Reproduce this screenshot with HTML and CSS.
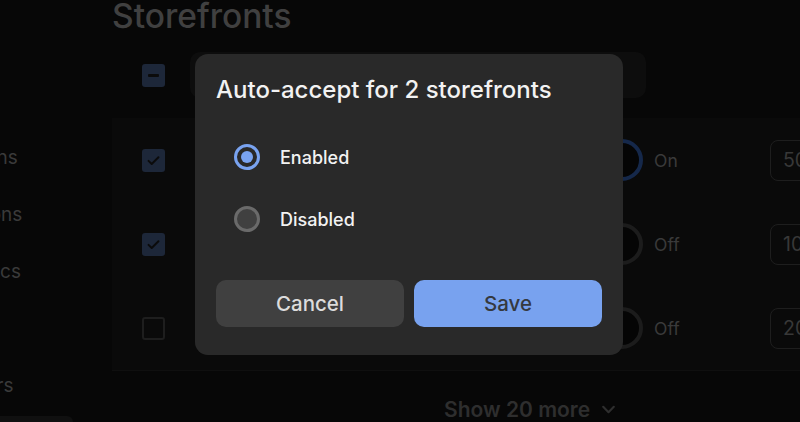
FILE: index.html
```html
<!DOCTYPE html>
<html lang="en">
<head>
<meta charset="utf-8">
<title>Storefronts</title>
<link rel="stylesheet" href="styles.css">
</head>
<body>
<div class="app">
  <nav class="sidebar">
    <ul class="nav">
      <li class="nav-item">Promotions</li>
      <li class="nav-item">Integrations</li>
      <li class="nav-item">Diagnostics</li>
      <li class="nav-item">Help</li>
      <li class="nav-item">Customers</li>
    </ul>
    <div class="nav-active"></div>
  </nav>
  <main class="main">
    <h1 class="page-title">Storefronts</h1>
    <div class="toolbar">
      <span class="checkbox checkbox-mixed"><span class="minus"></span></span>
      <div class="search"></div>
    </div>
    <section class="card">
      <div class="row">
        <span class="checkbox checkbox-on"><svg viewBox="0 0 24 24" width="17" height="17"><path d="M5 12.5l4.5 4.5L19 7.5" fill="none" stroke="#0b0b0b" stroke-width="2.8" stroke-linecap="round" stroke-linejoin="round"/></svg></span>
        <span class="name"></span>
        <span class="toggle toggle-on"></span>
        <span class="status">On</span>
        <span class="field">50</span>
      </div>
      <div class="row">
        <span class="checkbox checkbox-on"><svg viewBox="0 0 24 24" width="17" height="17"><path d="M5 12.5l4.5 4.5L19 7.5" fill="none" stroke="#0b0b0b" stroke-width="2.8" stroke-linecap="round" stroke-linejoin="round"/></svg></span>
        <span class="name"></span>
        <span class="toggle"></span>
        <span class="status">Off</span>
        <span class="field">10</span>
      </div>
      <div class="row">
        <span class="checkbox"></span>
        <span class="name"></span>
        <span class="toggle"></span>
        <span class="status">Off</span>
        <span class="field">20</span>
      </div>
    </section>
    <div class="more">Show 20 more <svg class="chev" viewBox="0 0 16 16" width="17" height="17"><path d="M3 5.5l5 5 5-5" fill="none" stroke="#2e2e2e" stroke-width="2" stroke-linecap="round" stroke-linejoin="round"/></svg></div>
  </main>
</div>

<div class="modal" role="dialog" aria-labelledby="dlg-title">
  <h2 class="modal-title" id="dlg-title">Auto-accept for 2 storefronts</h2>
  <div class="options">
    <label class="option">
      <span class="radio radio-on"><span class="dot"></span></span>
      <span class="option-label">Enabled</span>
    </label>
    <label class="option">
      <span class="radio"></span>
      <span class="option-label">Disabled</span>
    </label>
  </div>
  <div class="actions">
    <button class="btn btn-secondary">Cancel</button>
    <button class="btn btn-primary">Save</button>
  </div>
</div>
</body>
</html>
```

FILE: styles.css
```css
* { box-sizing: border-box; }
html, body {
  margin: 0;
  height: 422px;
  overflow: hidden;
  background: #070707;
  font-family: Inter, "Noto Sans", "Liberation Sans", sans-serif;
}
.app {
  display: flex;
  height: 422px;
}
.sidebar {
  width: 112px;
  flex: none;
  display: flex;
  flex-direction: column;
  overflow: hidden;
}
.nav {
  list-style: none;
  margin: 146px 0 0 -84px;
  padding: 0;
  display: flex;
  flex-direction: column;
  gap: 33px;
}
.nav-item {
  height: 24px;
  line-height: 24px;
  font-size: 19px;
  color: #3a3a3a;
  white-space: nowrap;
}
.nav-active {
  margin-top: 18px;
  height: 30px;
  width: 73px;
  border-radius: 0 10px 0 0;
  background: #101010;
}
.main {
  flex: 1;
  min-width: 0;
}
.page-title {
  margin: 0;
  font-size: 33.5px;
  line-height: 33px;
  font-weight: 500;
  color: #404040;
}
.toolbar {
  display: flex;
  align-items: center;
  gap: 25px;
  margin-top: 19px;
  padding-left: 30px;
  height: 46px;
}
.search {
  width: 456px;
  height: 46px;
  border-radius: 10px;
  background: #0d0d0d;
}
.checkbox {
  width: 23px;
  height: 23px;
  flex: none;
  border-radius: 3px;
  border: 2px solid #1e1e1e;
  display: flex;
  align-items: center;
  justify-content: center;
}
.checkbox-on, .checkbox-mixed {
  border: none;
  background: #1d2739;
}
.minus {
  width: 11px;
  height: 3px;
  border-radius: 1px;
  background: #0b0b0b;
}
.card {
  margin-top: 20px;
  background: #0a0a0a;
  border-bottom: 1px solid #0f0f0f;
}
.row {
  height: 84px;
  display: flex;
  align-items: center;
  padding-left: 30px;
}
.name {
  width: 436px;
  flex: none;
}
.toggle {
  width: 42px;
  height: 42px;
  flex: none;
  border-radius: 50%;
  border: 4px solid #1c1c1c;
  background: #050505;
}
.toggle-on {
  border-color: #15284a;
}
.status {
  width: 127px;
  flex: none;
  padding-left: 11px;
  font-size: 17.5px;
  color: #3a3a3a;
}
.field {
  width: 120px;
  height: 41px;
  flex: none;
  border: 1px solid #1e1e1e;
  border-radius: 8px;
  padding-left: 12px;
  display: flex;
  align-items: center;
  font-size: 19.5px;
  color: #383838;
}
.more {
  margin-top: 26px;
  padding-left: 332px;
  display: flex;
  align-items: center;
  gap: 10px;
  font-size: 21px;
  font-weight: 600;
  color: #2e2e2e;
}

/* modal */
.modal {
  position: absolute;
  left: 195px;
  top: 54px;
  width: 428px;
  height: 301px;
  background: #292929;
  border-radius: 13px;
  padding: 22px 21px 28px;
  display: flex;
  flex-direction: column;
}
.modal-title {
  margin: 0;
  font-size: 24px;
  line-height: 28px;
  font-weight: 500;
  color: #f2f2f2;
}
.options {
  margin-top: 22px;
  display: flex;
  flex-direction: column;
}
.option {
  height: 62px;
  display: flex;
  align-items: center;
  gap: 20px;
  padding-left: 18px;
}
.radio {
  width: 26px;
  height: 26px;
  border-radius: 50%;
  border: 3px solid #6a6a6a;
  background: #404040;
  display: flex;
  align-items: center;
  justify-content: center;
}
.radio-on {
  border-color: #79a3f0;
  background: #292929;
}
.dot {
  width: 12px;
  height: 12px;
  border-radius: 50%;
  background: #79a3f0;
}
.option-label {
  font-size: 18px;
  font-weight: 500;
  color: #f2f2f2;
}
.actions {
  margin-top: auto;
  display: flex;
  gap: 10px;
}
.btn {
  flex: 1;
  height: 47px;
  border: none;
  border-radius: 10px;
  font-family: inherit;
  font-size: 20.5px;
  font-weight: 500;
}
.btn-secondary {
  background: #404040;
  color: #dcdcdc;
}
.btn-primary {
  background: #78a2ef;
  color: #35393f;
}
```
